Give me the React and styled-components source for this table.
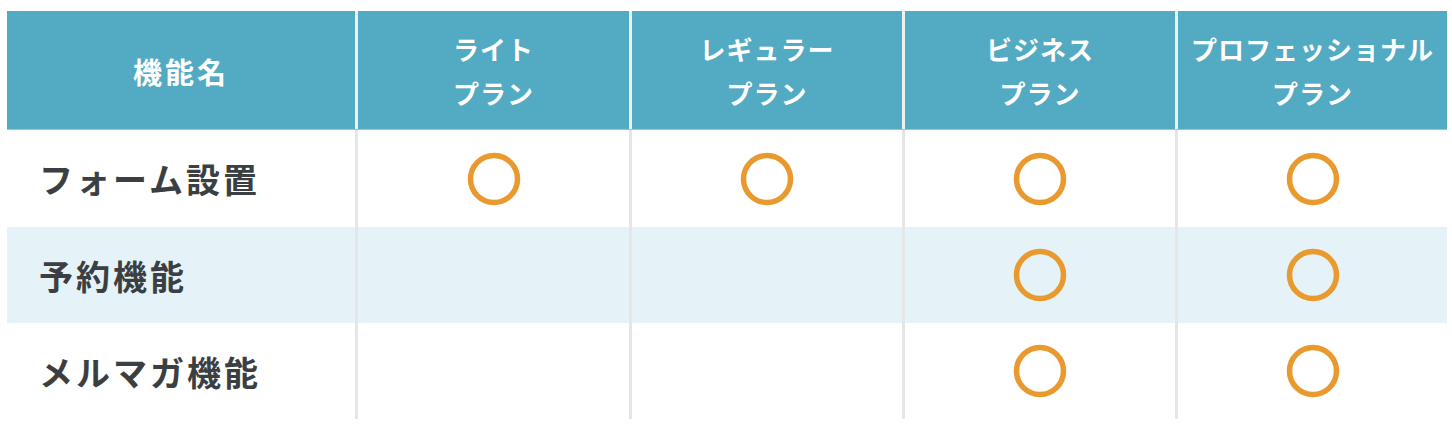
import React from "react";
import styled, { createGlobalStyle } from "styled-components";

const GlobalStyle = createGlobalStyle`
    body {
        margin: 0;
        background: #ffffff;
        font-family: "Noto Sans CJK JP", "Noto Sans", sans-serif;
    }
`;

const Wrapper = styled.div`
    padding: 11px 0 0 7px;
`;

const Table = styled.div`
    width: 1440px;
`;

const Row = styled.div`
    display: grid;
    grid-template-columns: 348px 274px 273px 273px 272px;
    height: ${props => props.header ? "119px" : props.first ? "97px" : "96px"};
    background: ${props => props.header ? "#52aac3" : props.shaded ? "#e5f2f7" : "#ffffff"};
    border-bottom: ${props => props.header ? "1px solid #8fcbdb" : "none"};
    box-sizing: border-box;
`;

const HeadCell = styled.div`
    box-sizing: border-box;
    border-left: ${props => props.divider ? "3px solid #eef1f2" : "none"};
    display: flex;
    align-items: center;
    justify-content: center;
    text-align: center;
    color: #ffffff;
    font-size: ${props => props.big ? "29px" : "26px"};
    font-weight: 700;
    line-height: 44px;
    letter-spacing: ${props => props.big ? "3px" : "1px"};
    padding-top: 2px;
`;

const LabelCell = styled.div`
    display: flex;
    align-items: center;
    padding-left: 32px;
    color: #3b3f42;
    font-size: 34px;
    font-weight: 700;
    letter-spacing: 3px;
`;

const MarkCell = styled.div`
    box-sizing: border-box;
    border-left: 3px solid #e6e6e6;
    display: flex;
    align-items: center;
    justify-content: center;
`;

const Circle = () => (
    <svg width="56" height="56" viewBox="0 0 56 56">
        <circle cx="28" cy="28" r="23.5" fill="none" stroke="#e99a2e" strokeWidth="5.5" />
    </svg>
);

const plans = [
    ["ライト", "プラン"],
    ["レギュラー", "プラン"],
    ["ビジネス", "プラン"],
    ["プロフェッショナル", "プラン"],
];

const features = [
    { name: "フォーム設置", marks: [true, true, true, true] },
    { name: "予約機能", marks: [false, false, true, true] },
    { name: "メルマガ機能", marks: [false, false, true, true] },
];

function App() {
    return (
        <>
            <GlobalStyle />
            <Wrapper>
                <Table>
                    <Row header>
                        <HeadCell big>機能名</HeadCell>
                        {plans.map((p) => (
                            <HeadCell divider key={p[0]}>
                                {p[0]}<br />{p[1]}
                            </HeadCell>
                        ))}
                    </Row>
                    {features.map((f, i) => (
                        <Row key={f.name} first={i === 0} shaded={i === 1}>
                            <LabelCell>{f.name}</LabelCell>
                            {f.marks.map((m, j) => (
                                <MarkCell key={j}>{m && <Circle />}</MarkCell>
                            ))}
                        </Row>
                    ))}
                </Table>
            </Wrapper>
        </>
    );
}

export default App;
